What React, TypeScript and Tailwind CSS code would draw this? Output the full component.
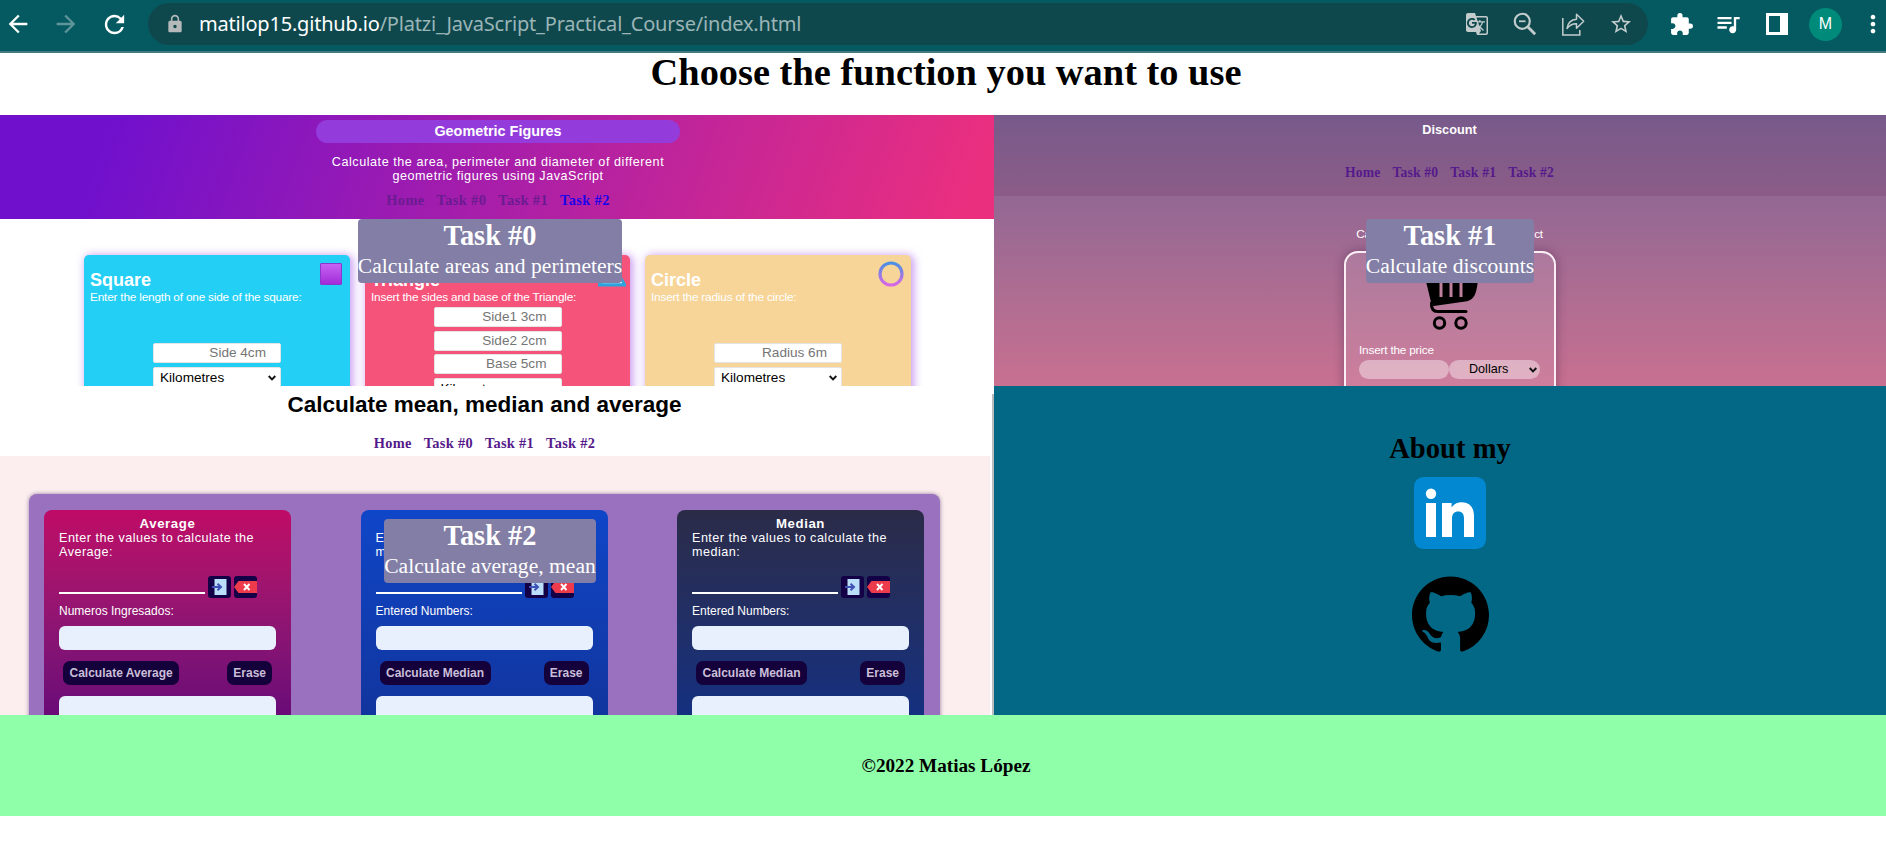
import type { ReactNode } from "react";
import {
  MdArrowBack,
  MdArrowForward,
  MdExtension,
  MdGTranslate,
  MdLock,
  MdMoreVert,
  MdQueueMusic,
  MdRefresh,
  MdStarBorder,
} from "react-icons/md";

const SANS = "font-['Liberation_Sans',Arial,sans-serif]";
const SERIF = "font-['Liberation_Serif','Times_New_Roman',serif]";

function Slot({ className, children }: { className: string; children: ReactNode }) {
  return <span className={`flex shrink-0 items-center justify-center ${className}`}>{children}</span>;
}

function BrowserBar() {
  return (
    <div className="flex h-[53px] items-start border-b-2 border-[#437b7f] bg-[#045a60] pt-[3px] text-white">
      <div className="flex h-[42px] w-[148px] shrink-0 items-center pl-[2px]">
        <Slot className="w-8"><MdArrowBack size={28} /></Slot>
        <Slot className="ml-4 w-8 text-[#5f9599]"><MdArrowForward size={28} /></Slot>
        <Slot className="ml-4 w-8"><MdRefresh size={29} /></Slot>
      </div>
      <div className="flex h-[42px] w-[1500px] shrink-0 items-center rounded-full bg-[#0e484d] text-[#c3cccd]">
        <Slot className="ml-[17px] w-5 text-[#b5b9ba]"><MdLock size={20} /></Slot>
        <span className="ml-[14px] font-['Noto_Sans','Open_Sans',sans-serif] text-[20px] leading-[42px] tracking-[-0.2px] whitespace-nowrap text-[#9bb5b7]">
          <span className="text-white">matilop15.github.io</span>/Platzi_JavaScript_Practical_Course/index.html
        </span>
        <div className="mr-[15px] ml-auto flex items-center gap-6">
          <Slot className="w-6"><MdGTranslate size={24} /></Slot>
          <Slot className="w-6">
            <svg width="24" height="24" viewBox="0 0 22 22" fill="none" stroke="currentColor" strokeWidth="2">
              <circle cx="8.5" cy="8.5" r="6.9" />
              <path d="M13.5 13.5l6.800 6.800" strokeWidth="2.6" />
              <path d="M5.5 8.5h6" strokeWidth="1.6" />
            </svg>
          </Slot>
          <Slot className="w-6">
            <svg width="24" height="24" viewBox="0 0 24 24" fill="none" stroke="currentColor" strokeWidth="1.5">
              <path d="M1.8 6v17h17v-5" />
              <path d="M6 16.5c.8-5.500 3.800-8.800 9.500-9.200V2.200l7.200 7-7.200 7v-4.500c-4-.2-7 1.400-9.500 4.800z" strokeLinejoin="round" />
            </svg>
          </Slot>
          <Slot className="w-6"><MdStarBorder size={28} /></Slot>
        </div>
      </div>
      <div className="flex h-[42px] items-center">
        <Slot className="ml-5 w-[26px]"><MdExtension size={25} /></Slot>
        <Slot className="ml-[20px] w-7"><MdQueueMusic size={32} /></Slot>
        <span className="ml-6 h-[22px] w-[22px] border-[3px] border-r-[8px] border-white" />
        <span className={`${SANS} ml-[21px] flex h-[33px] w-[33px] items-center justify-center rounded-full bg-[#008a7a] text-[16px]`}>M</span>
        <Slot className="ml-[17px] w-7"><MdMoreVert size={30} /></Slot>
      </div>
    </div>
  );
}

function TaskNav({ className, last = "" }: { className: string; last?: string }) {
  return (
    <nav className={`${SERIF} flex justify-center font-bold whitespace-nowrap ${className}`}>
      <span>Home</span>
      <span>Task #0</span>
      <span>Task #1</span>
      <span className={last}>Task #2</span>
    </nav>
  );
}

function TaskLabel({ className, title, text }: { className: string; title: string; text: string }) {
  return (
    <div className={`${SERIF} absolute z-10 flex h-16 flex-col items-center rounded-[4px] bg-[#827ea5] pt-px text-white ${className}`}>
      <h2 className="text-[28.4px] leading-8 font-bold">{title}</h2>
      <p className="text-[21.6px] leading-[29px] whitespace-nowrap">{text}</p>
    </div>
  );
}

function Chevron() {
  return (
    <svg width="8" height="6" viewBox="0 0 8 6" fill="none" stroke="#111" strokeWidth="1.9">
      <path d="M0.700 1l3.300 3.300L7.300 1" />
    </svg>
  );
}

type FigureProps = {
  className: string;
  title: string;
  text: string;
  fields: string[];
  fieldsClass: string;
  icon: ReactNode;
};

function FigureCard({ className, title, text, fields, fieldsClass, icon }: FigureProps) {
  return (
    <article className={`relative h-[200px] rounded-t-[5px] px-[6px] pt-[15px] text-white shadow-[2px_1px_8px_1px_rgba(150,60,230,0.5)] ${className}`}>
      <h3 className="text-[18px] leading-5 font-bold">{title}</h3>
      <p className="text-[11.8px] leading-[14px] tracking-[-0.19px] whitespace-nowrap">{text}</p>
      <div className={`mx-auto flex w-32 flex-col text-[13.6px] ${fieldsClass}`}>
        {fields.map((field) => (
          <div key={field} className="h-5 rounded-[2px] border border-[#e4e4e4] bg-white pr-[14px] text-right leading-[18px] text-[#757575]">
            {field}
          </div>
        ))}
        <div className="flex h-[22px] items-center justify-between rounded-[2px] border border-[#e4e4e4] bg-white pr-1 pl-[6px] leading-5 text-black">
          Kilometres <Chevron />
        </div>
      </div>
      <div className="absolute top-[7px] right-[7px]">{icon}</div>
    </article>
  );
}

function GeometryPreview() {
  return (
    <section className={`${SANS} relative h-[271px] w-[994px] shrink-0 overflow-hidden bg-white`}>
      <header className="flex h-[104px] flex-col items-center bg-[linear-gradient(109.6deg,#7010cd_11%,#ea2f7f_97%)] pt-[5px] pl-[2px] text-white">
        <h2 className="h-[23px] w-[364px] rounded-full bg-[#943cdb] text-center text-[14.4px] leading-[22px] font-bold">Geometric Figures</h2>
        <p className="mt-3 text-center text-[12.6px] leading-[14px] tracking-[0.55px]">
          Calculate the area, perimeter and diameter of different
          <br />
          geometric figures using JavaScript
        </p>
        <TaskNav className="mt-[9px] gap-3 text-[14.4px] leading-4 tracking-[0.38px] text-[#6b1b91]" last="text-[#1c04ea]" />
      </header>
      <div className="flex gap-[15px] pt-9 pl-[84px]">
        <FigureCard
          className="w-[266px] bg-[#24cff5]"
          title="Square"
          text="Enter the length of one side of the square:"
          fields={["Side 4cm"]}
          fieldsClass="mt-[39px] gap-1"
          icon={<div className="mt-px mr-px h-[22px] w-[22px] rounded-[1px] border border-[#8a36cf] bg-linear-to-b from-[#c661f3] to-[#a32ad8]" />}
        />
        <FigureCard
          className="w-[265px] bg-[#f6537b]"
          title="Triangle"
          text="Insert the sides and base of the Triangle:"
          fields={["Side1 3cm", "Side2 2cm", "Base 5cm"]}
          fieldsClass="mt-[3px] gap-[3.6px]"
          icon={
            <svg className="-mr-[3px]" width="28" height="25" viewBox="0 0 28 25">
              <path d="M14 3L26 22.500H2z" fill="none" stroke="#2ba4dc" strokeWidth="4" />
              <path d="M4 20.500h20" stroke="#d8f0ff" strokeWidth="1.500" />
            </svg>
          }
        />
        <FigureCard
          className="w-[266px] bg-[#f7d599]"
          title="Circle"
          text="Insert the radius of the circle:"
          fields={["Radius 6m"]}
          fieldsClass="mt-[39px] gap-1"
          icon={
            <svg className="-mt-px" width="26" height="26" viewBox="0 0 26 26" fill="none">
              <defs>
                <linearGradient id="ring" x1="0" y1="0" x2="0" y2="1">
                  <stop offset="0" stopColor="#4a90e2" />
                  <stop offset="1" stopColor="#d967e6" />
                </linearGradient>
              </defs>
              <circle cx="13" cy="13" r="11" stroke="url(#ring)" strokeWidth="3.2" />
            </svg>
          }
        />
      </div>
      <TaskLabel className="top-[104px] left-[358px] w-[264px]" title="Task #0" text="Calculate areas and perimeters" />
    </section>
  );
}

function DiscountPreview() {
  return (
    <section className={`${SANS} relative h-[271px] grow overflow-hidden bg-linear-to-b from-[#7b6394] to-[#c87090] text-white`}>
      <header className="h-[81px] bg-linear-to-b from-[#775a8b] to-[#8c5c87] pt-[7px] pl-[20px]">
        <h2 className="pr-px text-center text-[12.7px] leading-4 font-bold">Discount</h2>
        <TaskNav className="mt-[27px] mr-px gap-3 text-[13.6px] leading-4 tracking-[0.2px] text-[#551a8b]" />
      </header>
      <p className="mt-[30px] pl-[19px] text-center text-[11.8px] leading-4 tracking-[-0.3px]">Calculate the discount of your product</p>
      <div className="mt-[9px] ml-[350px] flex h-[170px] w-[212px] flex-col rounded-t-[14px] border-2 border-[#fbeef5] bg-white/10 pr-[14px] pl-[13px] shadow-[0_0_8px_2px_rgba(80,40,80,0.35)]">
        <svg className="mt-[7px] ml-[66px] shrink-0" width="54" height="72" viewBox="1425 260 54 72" fill="none">
          <path d="M1424 273h55l-2 14c-1.500 9-4 12.500-10 14.300l-35 5z" fill="#000" />
          <path d="M1441 282v15M1451 282v15M1461 282v15" stroke="#bf809e" strokeWidth="3" />
          <path d="M1431.500 303c-.5 6 2 8.500 6 8.500h28.500" stroke="#000" strokeWidth="3" strokeLinecap="round" />
          <circle cx="1439.500" cy="323" r="5.200" stroke="#000" strokeWidth="3" />
          <circle cx="1461" cy="323" r="5.200" stroke="#000" strokeWidth="3" />
        </svg>
        <span className="mt-[11px] text-[11.8px] leading-[14px] tracking-[-0.2px]">Insert the price</span>
        <div className="mt-[3px] flex">
          <span className="h-[19px] w-[90px] rounded-full bg-white/40" />
          <span className="flex h-[19px] w-[91px] items-center justify-between rounded-full bg-white/40 pr-[3px] pl-5 text-[12.6px] leading-[19px] text-black">
            Dollars <Chevron />
          </span>
        </div>
      </div>
      <TaskLabel className="top-[104px] left-[372px] w-[168px]" title="Task #1" text="Calculate discounts" />
    </section>
  );
}

type StatProps = { className: string; title: string; word: string; label: string; action: string };

function StatCard({ className, title, word, label, action }: StatProps) {
  return (
    <article className={`flex h-[205px] w-[247px] shrink-0 flex-col rounded-t-[8px] px-[15px] pt-[6px] text-white ${className}`}>
      <h3 className="text-center text-[13.2px] leading-4 font-bold tracking-[0.6px]">{title}</h3>
      <p className="text-[12.6px] leading-[13.600px] tracking-[0.48px] whitespace-nowrap">
        Enter the values to calculate the
        <br />
        {word}
      </p>
      <div className="mt-[17px] flex items-start">
        <span className="h-[18px] w-[146px] border-b-2 border-white" />
        <span className="ml-[3px] flex h-[22px] w-[23px] items-center justify-center rounded-[3px] bg-[#130046]">
          <svg width="15" height="16" viewBox="0 0 15 16">
            <path d="M2.500 0h12v16h-12z" fill="#bbdefb" />
            <path d="M0 8h8M5.500 4.700L9 8l-3.500 3.300" fill="none" stroke="#3f51b5" strokeWidth="2" />
          </svg>
        </span>
        <span className="ml-[3px] flex h-[22px] w-[23px] items-center rounded-[3px] bg-[#130046]">
          <svg width="23" height="12" viewBox="0 0 23 12">
            <path d="M4.500 0H23v12H4.500L0 6z" fill="#ee3b4b" />
            <path d="M10 3l5.500 6M15.500 3L10 9" stroke="#fff" strokeWidth="1.900" />
          </svg>
        </span>
      </div>
      <span className="mt-[5px] text-[12px] leading-4">{label}</span>
      <span className="mt-[7px] h-6 shrink-0 rounded-[6px] bg-[#e8f0fd]" />
      <div className="mt-[11px] flex justify-between px-1 text-[12px] leading-6 font-bold text-[#cabfd8]">
        <span className="rounded-[7px] bg-[#14003a] px-[6.500px]">{action}</span>
        <span className="rounded-[7px] bg-[#14003a] px-[6px]">Erase</span>
      </div>
      <span className="mt-[11px] h-6 shrink-0 rounded-[6px] bg-[#e8f0fd]" />
    </article>
  );
}

function StatsPreview() {
  return (
    <section className={`${SANS} relative h-[329px] w-[994px] shrink-0 overflow-hidden bg-white`}>
      <header className="h-[70px] pt-[7px]">
        <h2 className="pr-[25px] text-center text-[22.5px] leading-6 font-bold">Calculate mean, median and average</h2>
        <TaskNav className="mt-[18px] gap-3 pr-[25px] text-[14.4px] leading-4 tracking-[0.3px] text-[#551a8b]" />
      </header>
      <div className="h-[259px] w-[990px] bg-[#fceeee] pt-[38px] pl-[29px]">
        <div className="flex h-[240px] w-[911px] justify-between rounded-t-[8px] bg-[#9971be] pt-4 pr-4 pl-[15px] shadow-[0_0_4px_rgba(80,50,110,0.6)]">
          <StatCard className="bg-linear-to-b from-[#bf0a66] to-[#6a0a78]" title="Average" word="Average:" label="Numeros Ingresados:" action="Calculate Average" />
          <StatCard className="bg-linear-to-b from-[#0f46c8] to-[#11359e]" title="Mean" word="mean:" label="Entered Numbers:" action="Calculate Median" />
          <StatCard className="bg-linear-to-b from-[#2b2b48] to-[#143080]" title="Median" word="median:" label="Entered Numbers:" action="Calculate Median" />
        </div>
      </div>
      <div className="absolute top-2 right-0 h-[321px] w-[2px] bg-[#b9bcbd]" />
      <TaskLabel className="top-[133px] left-[384px] w-[212px]" title="Task #2" text="Calculate average, mean" />
    </section>
  );
}

function About() {
  return (
    <section className={`${SERIF} flex h-[329px] grow flex-col items-center bg-[#036885] pl-[20px] pt-[47px]`}>
      <h2 className="text-[28.6px] leading-8 font-bold text-black">About my</h2>
      <svg className="mt-3" width="72" height="72" viewBox="0 0 72 72">
        <rect width="72" height="72" rx="9.500" fill="#0288d1" />
        <circle cx="17" cy="16.800" r="5.200" fill="#fff" />
        <path d="M12 26h10v34H12zM28 26h9.600v4.600c1.900-3.200 5.400-5.400 10-5.400C56 25.200 60 30.500 60 39.500V60H50V41.500c0-4.500-2-7-5.800-7-3.900 0-6.200 2.600-6.200 7V60H28z" fill="#fff" />
      </svg>
      <svg className="mt-[27px]" width="77" height="77" viewBox="0 0 16 15.800">
        <path d="M8 0C3.580 0 0 3.580 0 8c0 3.540 2.290 6.530 5.470 7.590.4.070.55-.17.55-.38 0-.19-.01-.82-.01-1.490-2.010.37-2.530-.49-2.690-.94-.09-.23-.48-.94-.82-1.130-.28-.15-.68-.52-.01-.53.63-.01 1.080.58 1.230.82.72 1.210 1.870.87 2.330.66.07-.52.28-.87.51-1.070-1.780-.2-3.640-.89-3.640-3.950 0-.87.31-1.590.82-2.150-.08-.2-.36-1.020.08-2.120 0 0 .67-.21 2.200.82.64-.18 1.320-.27 2-.27s1.360.09 2 .27c1.530-1.040 2.200-.82 2.200-.82.44 1.100.16 1.920.08 2.120.51.56.82 1.270.82 2.150 0 3.070-1.870 3.750-3.650 3.950.29.25.54.73.54 1.480 0 1.070-.01 1.930-.01 2.200 0 .21.15.46.55.38A8.010 8.010 0 0 0 16 8c0-4.420-3.580-8-8-8z" />
      </svg>
    </section>
  );
}

export default function App() {
  return (
    <div className="h-[863px] w-[1886px] overflow-hidden bg-white">
      <BrowserBar />
      <h1 className={`${SERIF} h-[62px] pl-[6px] text-center text-[38.400px] leading-[38px] font-bold text-black`}>Choose the function you want to use</h1>
      <main>
        <div className="flex">
          <GeometryPreview />
          <DiscountPreview />
        </div>
        <div className="flex">
          <StatsPreview />
          <About />
        </div>
      </main>
      <footer className={`${SERIF} flex h-[101px] items-center justify-center bg-[#90ffaa] pt-[2px] pl-[6px] text-[19.2px] font-bold text-black`}>©2022 Matias López</footer>
    </div>
  );
}
